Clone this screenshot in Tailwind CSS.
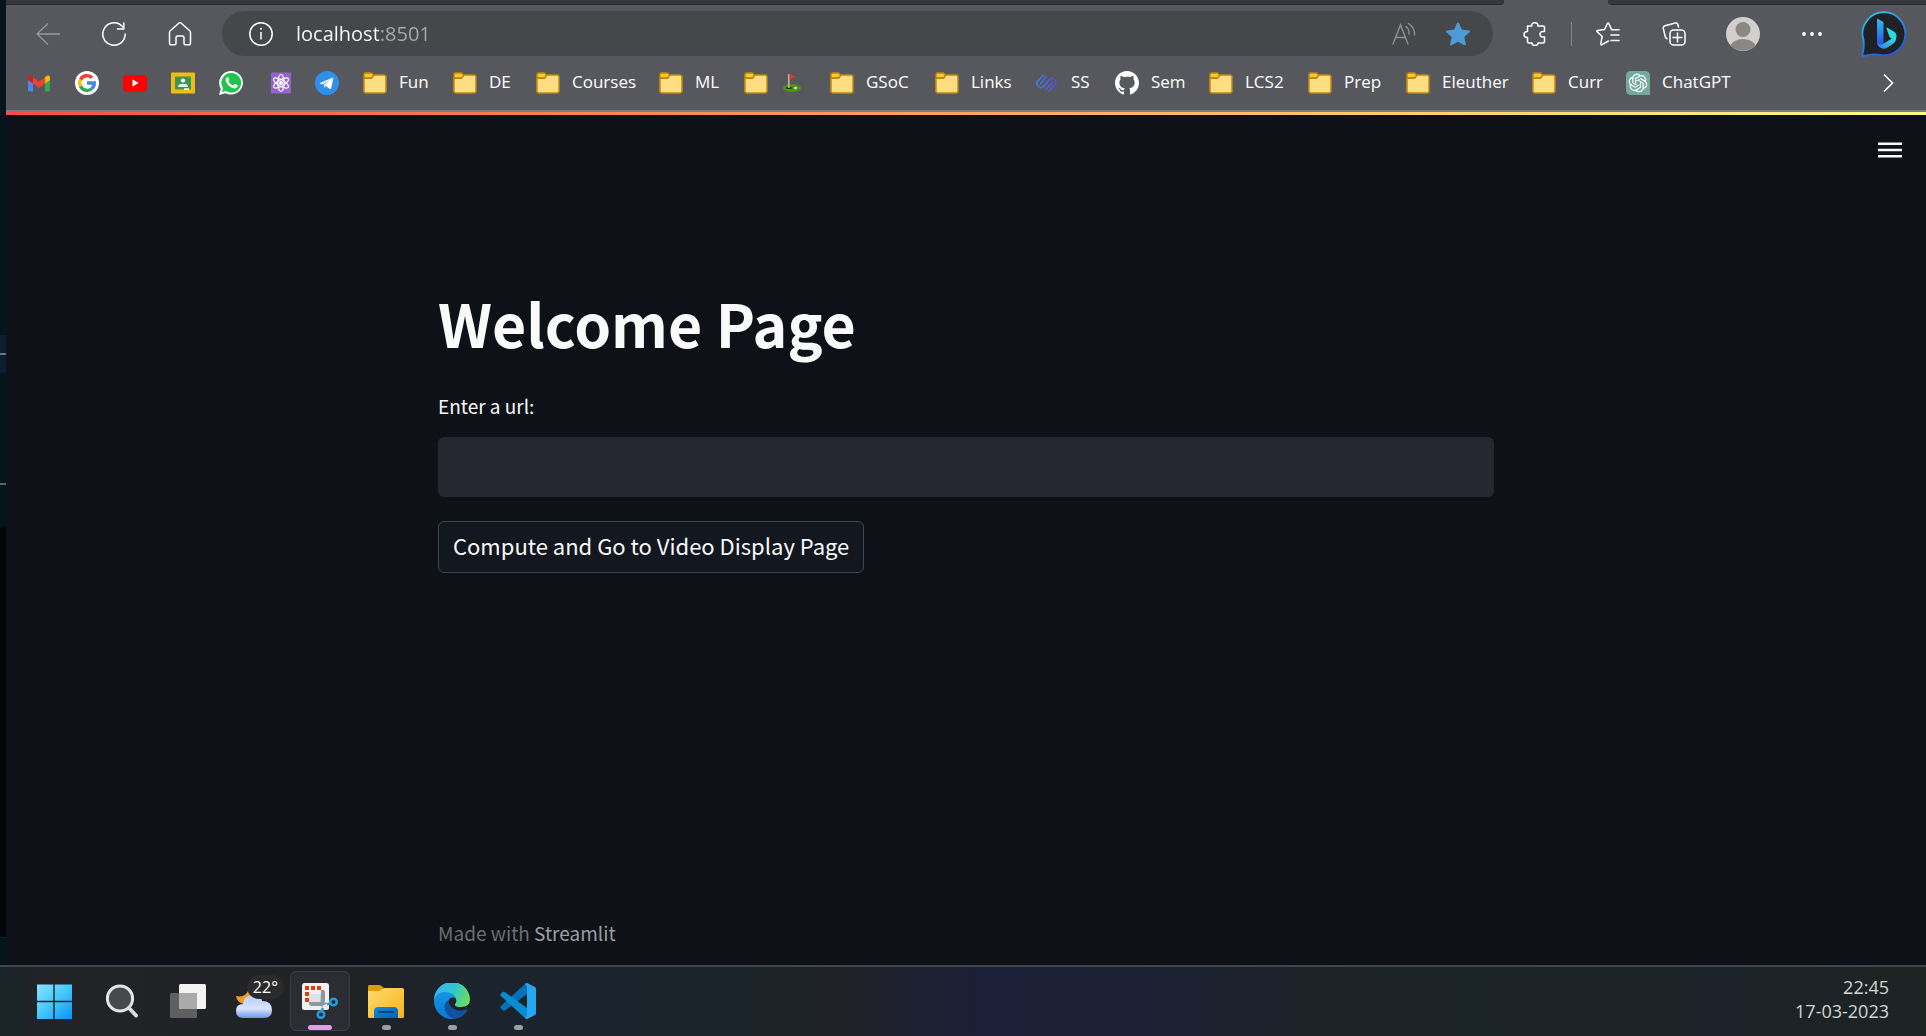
<!DOCTYPE html>
<html lang="en">
<head>
<meta charset="utf-8">
<meta name="viewport" content="width=device-width, initial-scale=1">
<title>Welcome Page</title>
<script src="https://cdn.jsdelivr.net/npm/@tailwindcss/browser@4"></script>
</head>
<body class="flex min-h-screen flex-col bg-[#0e1117] font-['Open_Sans','Noto_Sans',sans-serif] text-white">

<!-- shared symbols -->
<svg class="hidden" aria-hidden="true">
  <symbol id="folder" viewBox="0 0 24 24">
    <path d="M1 21V3.500Q1 2 2.500 2H8.500L10.500 4V7H1Z" fill="#fdc72f" stroke="#b98a10" stroke-width="1.400"/>
    <path d="M1 7.200H8.500L11 4H21Q23 4 23 6V20Q23 22 21 22H3Q1 22 1 20Z" fill="#ffdd80" stroke="#b98a10" stroke-width="1.500" stroke-linejoin="round"/>
  </symbol>
</svg>

<div class="flex flex-1">
  <!-- sliver of the window behind -->
  <div class="flex w-[6px] shrink-0 flex-col bg-[#06151d]" aria-hidden="true">
    <div class="h-[335px]"></div>
    <div class="h-[18px] bg-[#0c1e2d]"></div>
    <div class="h-[2px] bg-[#66767f]"></div>
    <div class="h-[18px] bg-[#0c1e2d]"></div>
    <div class="h-[110px]"></div>
    <div class="h-[2px] bg-[#55656d]"></div>
    <div class="h-[42px]"></div>
    <div class="flex-1 bg-[#020507]"></div>
    <div class="h-7 border-t border-[#12262e]"></div>
  </div>

  <div class="flex min-w-0 flex-1 flex-col">
    <!-- browser chrome -->
    <header class="border-b-2 border-[#7b7c80] bg-[#57585d]">
      <div class="flex h-[5px]">
        <div class="flex-1 rounded-br-sm border-b border-[#2a2b2d] bg-[#37383b]"></div>
        <div class="w-[104px]"></div>
        <div class="w-[318px] rounded-bl-sm border-b border-[#2a2b2d] bg-[#37383b]"></div>
      </div>

      <div class="flex h-[57px] items-center pl-[9px] pr-1">
        <button class="flex w-[66px] justify-center" aria-label="Back">
          <svg class="size-6" viewBox="0 0 24 24" fill="none" stroke="#97989b" stroke-width="1.300"><path d="M24 12H1M12 1.500L1 12L12 22.500"/></svg>
        </button>
        <button class="flex w-[66px] justify-center" aria-label="Refresh">
          <svg class="size-6" viewBox="0 0 24 24" fill="none" stroke="#fff" stroke-width="1.500" stroke-linecap="round" stroke-linejoin="round"><path d="M23.200 12A11.200 11.200 0 1 1 20.700 5M21.800 1V7H15.500"/></svg>
        </button>
        <button class="flex w-[66px] justify-center" aria-label="Home">
          <svg class="size-6" viewBox="0 0 24 24" fill="none" stroke="#fff" stroke-width="1.500" stroke-linejoin="round"><path d="M1.500 10.500Q1.500 9.500 2.300 8.800L11 1Q12 .200 13 1L21.700 8.800Q22.500 9.500 22.500 10.500V21Q22.500 22.800 20.700 22.800H17.500Q16 22.800 16 21.200V15.500Q16 14 14.500 14H9.500Q8 14 8 15.500V21.200Q8 22.800 6.500 22.800H3.300Q1.500 22.800 1.500 21Z"/></svg>
        </button>

        <div class="ml-[9px] flex h-[45px] min-w-0 flex-1 items-center rounded-full bg-[#46474a] pl-[27px] pr-2">
          <button aria-label="Site information">
            <svg class="size-6" viewBox="0 0 24 24" fill="none" stroke="#fff" stroke-width="1.500"><circle cx="12" cy="12" r="11.200"/><path d="M12 10V17.500"/><circle cx="12" cy="6.800" r="1" fill="#fff" stroke="none"/></svg>
          </button>
          <input type="text" aria-label="Address" value="localhost:8501" class="ml-[23px] h-8 min-w-0 flex-1 bg-linear-[to_right,#ffffff_83px,#a9a9ab_83px] bg-clip-text text-[20px] text-transparent outline-none">
          <button class="flex w-[54px] justify-center" aria-label="Read aloud">
            <svg class="size-6" viewBox="0 0 24 24" fill="none" stroke="#8f9093" stroke-width="1.400" stroke-linecap="round"><path d="M1 22L8.500 3L16 22M3.800 15.500H13.200M14 4.500Q17.500 7.500 17 12M16.500 1.500Q23 6 22.500 13"/></svg>
          </button>
          <button class="flex w-[54px] justify-center" aria-label="Edit favorite">
            <svg class="size-6" viewBox="0 0 24 24" fill="#4d9bd6" stroke="#4d9bd6" stroke-width="2" stroke-linejoin="round"><path d="M12 1.500L15.200 8.500L23 9.400L17.200 14.600L18.900 22.300L12 18.500L5.100 22.300L6.800 14.600L1 9.400L8.800 8.500Z"/></svg>
          </button>
        </div>

        <button class="ml-[9px] flex w-[66px] justify-center" aria-label="Extensions">
          <svg class="size-6" viewBox="0 0 24 24" fill="none" stroke="#fff" stroke-width="1.500" stroke-linejoin="round"><path d="M4.500 4H8.800Q8.300 .800 11.800 .800T14.800 4H20Q21.500 4 21.500 5.500V9.500Q17 8.800 17 12.200T21.500 15V19.500Q21.500 21 20 21H15Q15 23.500 12 23.500T9 21H6Q4.500 21 4.500 19.500V15.500Q1 15.500 1 12.500T4.500 9.500Z"/></svg>
        </button>
        <div class="mx-[3px] h-6 w-px bg-[#85868a]"></div>
        <button class="flex w-[66px] justify-center" aria-label="Favorites">
          <svg class="size-6" viewBox="0 0 24 24" fill="none" stroke="#fff" stroke-width="1.500" stroke-linecap="round" stroke-linejoin="round"><path d="M12.500 19L5.500 22.800Q4.500 23 4.700 21.800L6.200 14.500L1 9.500Q.400 8.600 1.500 8.400L8.500 7.500L11.500 1.500Q12.100 .600 12.700 1.500L15.800 7.800H23M15 13H23M15 18.500H23"/></svg>
        </button>
        <button class="flex w-[66px] justify-center" aria-label="Collections">
          <svg class="size-6" viewBox="0 0 24 24" fill="none" stroke="#fff" stroke-width="1.500" stroke-linecap="round" stroke-linejoin="round"><rect x="8" y="8" width="15" height="15" rx="3.500"/><path d="M15.500 11V20M11 15.500H20M16.500 5L15.800 2.300Q15.300 .500 13.300 1L3 3.800Q1 4.300 1.300 6.300L3.200 14.500Q3.500 16 5 16.700"/></svg>
        </button>
        <button class="ml-[3px] flex w-[66px] justify-center" aria-label="Profile">
          <svg class="size-[34px]" viewBox="0 0 34 34"><circle cx="17" cy="17" r="17" fill="#d2d0cd"/><circle cx="17" cy="12.500" r="7.500" fill="#8b8784"/><path d="M4.600 28.500Q8 22 17 22T29.400 28.500A17 17 0 0 1 4.600 28.500Z" fill="#8b8784"/></svg>
        </button>
        <button class="ml-[3px] flex w-[66px] justify-center" aria-label="Settings and more">
          <svg class="size-6" viewBox="0 0 24 24" fill="#fff"><circle cx="4" cy="12" r="1.900"/><circle cx="12" cy="12" r="1.900"/><circle cx="20" cy="12" r="1.900"/></svg>
        </button>
        <button class="flex w-[77px] justify-center" aria-label="Bing chat">
          <svg class="h-[46px] w-[46px]" viewBox="0 0 46 46">
            <defs>
              <linearGradient id="bingRing" x1="0" y1="0" x2=".5" y2="1"><stop offset="0" stop-color="#1cd8f4"/><stop offset="1" stop-color="#2357e8"/></linearGradient>
              <linearGradient id="bingStem" x1="0" y1="0" x2="0" y2="1"><stop offset="0" stop-color="#3cb8fa"/><stop offset="1" stop-color="#1d4fe0"/></linearGradient>
              <linearGradient id="bingBowl" x1="0" y1="1" x2="1" y2="0"><stop offset="0" stop-color="#3b7bf2"/><stop offset="1" stop-color="#2fe0dc"/></linearGradient>
            </defs>
            <path d="M23.500 1.200A21.500 21.500 0 1 1 22 44.300Q16 43 12 43.500L2.500 45Q1.200 45 1.500 43.500Q3.500 36 2.500 29A21.500 21.500 0 0 1 23.500 1.200Z" fill="#202124" stroke="url(#bingRing)" stroke-width="1.800"/>
            <path d="M16 8.500Q16 7.500 17 8L21.500 10.500Q22.500 11 22.500 12.500V33L19 36Q16 34 16 31Z" fill="url(#bingStem)"/>
            <path d="M25.500 17.500Q25.500 16 27 17L33.500 21Q36.500 23.500 35 27.500Q34 29.500 31.500 28.500L28.500 26Z" fill="#2cd9dd"/>
            <path d="M16 31Q17 35 21 33.500L31 27.500Q34.500 26 35 27.500Q35 31 31 33.500L26 36.800Q23 38.500 20 37Q16.500 35 16 31Z" fill="url(#bingBowl)"/>
          </svg>
        </button>
      </div>

      <nav class="flex h-12 items-center gap-6 overflow-hidden pb-[6px] pl-[21px] pr-[31px] text-[17px] leading-[22px]" aria-label="Favorites bar">
        <a href="#" aria-label="Gmail"><svg class="size-6" viewBox="0 0 24 24"><path d="M1 20V6L6 9.500V20Q6 20.500 5.500 20.500H2.500Q1 20.500 1 19Z" fill="#4a86f0"/><path d="M18 9.500L23 6V19Q23 20.500 21.500 20.500H18Z" fill="#35a652"/><path d="M1 9V6.500Q1 4 3.500 4.500L6 6V12.500Z" fill="#c5221f"/><path d="M6 6.200L12 10.800L18 6.200V12.500L12 17L6 12.500Z" fill="#ea4335"/><path d="M18 6L20 4.700Q23 4 23 6.500V9L18 12.500Z" fill="#fbbc04"/></svg></a>
        <a href="#" aria-label="Google"><svg class="size-6" viewBox="0 0 24 24" fill="none" stroke-width="3.400"><circle cx="12" cy="12" r="12" fill="#fff"/><path d="M17.200 6.800A7.300 7.300 0 0 0 5.500 8.700" stroke="#ea4335"/><path d="M5.500 8.700A7.300 7.300 0 0 0 5.500 15.300" stroke="#fbbc05"/><path d="M5.500 15.300A7.300 7.300 0 0 0 16.700 17.700" stroke="#34a853"/><path d="M16.700 17.700A7.300 7.300 0 0 0 19.300 12H12" stroke="#4285f4"/></svg></a>
        <a href="#" aria-label="YouTube"><svg class="size-6" viewBox="0 0 24 24"><rect y="4" width="24" height="16.500" rx="3.500" fill="#f00"/><path d="M9.500 8.300L15.500 12L9.500 15.700Z" fill="#fff"/></svg></a>
        <a href="#" aria-label="Classroom"><svg class="size-6" viewBox="0 0 24 24"><rect y="1.500" width="24" height="21" rx="1" fill="#f3bb16"/><rect x="4" y="5.500" width="16" height="13" fill="#3f9556"/><circle cx="12" cy="9.500" r="2.100" fill="#fff"/><path d="M7 15Q8 12.700 12 12.700T17 15V16H7Z" fill="#e5f2e8"/><path d="M13 17.200H18V19H13Z" fill="#e5f2e8"/></svg></a>
        <a href="#" aria-label="WhatsApp"><svg class="size-6" viewBox="0 0 24 24"><path d="M12.200 0A11.800 11.800 0 1 1 6.500 22.200L0 24L1.800 17.700A11.800 11.800 0 0 1 12.200 0Z" fill="#fff"/><path d="M12.200 2A9.800 9.800 0 1 1 7 20L2.900 21.100L4 17.200A9.800 9.800 0 0 1 12.200 2Z" fill="#1ec44b"/><path d="M8 6.200Q9.200 5.700 9.600 6.600L10.400 8.600Q10.600 9.300 9.500 10.500Q11 13.500 14.200 14.600L15.400 13.200Q15.800 12.800 16.300 13L18.400 14.100Q19 14.500 18.600 15.600Q17.600 17.800 15.300 17.500Q9 16 6.600 9.800Q6.200 7.300 8 6.200Z" fill="#fff"/></svg></a>
        <a href="#" aria-label="Physics"><svg class="size-6" viewBox="0 0 24 24" fill="none" stroke="#fff" stroke-width="1.200"><rect x="4" y="1.500" width="20" height="21" rx="1" fill="#9463cf" stroke="none"/><ellipse cx="14" cy="12" rx="3.200" ry="8.500"/><ellipse cx="14" cy="12" rx="3.200" ry="8.500" transform="rotate(60 14 12)"/><ellipse cx="14" cy="12" rx="3.200" ry="8.500" transform="rotate(120 14 12)"/><circle cx="14" cy="12" r="1.400" fill="#fff"/></svg></a>
        <a href="#" aria-label="Telegram"><svg class="size-6" viewBox="0 0 24 24"><circle cx="12" cy="12" r="12" fill="#2f8fea"/><path d="M5 12L17.300 6.800Q18.500 6.500 18.200 8L16.200 17.300Q15.800 18.600 14.500 17.800L9.200 14L15 9L7.500 13.300Q4 12.700 5 12Z" fill="#fff"/><path d="M8.500 13.500L14.500 9.200L10.800 14.700L9.800 17.300Z" fill="#d5e8fb"/></svg></a>
        <a href="#" class="flex w-[66px] shrink-0 gap-3"><svg class="size-6 shrink-0"><use href="#folder"/></svg>Fun</a>
        <a href="#" class="flex w-[59px] shrink-0 gap-3"><svg class="size-6 shrink-0"><use href="#folder"/></svg>DE</a>
        <a href="#" class="flex w-[99px] shrink-0 gap-3"><svg class="size-6 shrink-0"><use href="#folder"/></svg>Courses</a>
        <a href="#" class="flex w-[61px] shrink-0 gap-3"><svg class="size-6 shrink-0"><use href="#folder"/></svg>ML</a>
        <a href="#" class="flex w-[62px] shrink-0 gap-3" aria-label="Golf"><svg class="size-6 shrink-0"><use href="#folder"/></svg><svg class="size-6 shrink-0" viewBox="0 0 24 24"><ellipse cx="12" cy="17" rx="9" ry="4" fill="#4b931b"/><ellipse cx="9" cy="17" rx="3.200" ry="1" fill="#1d3810"/><path d="M8 3H9.600V17H8Z" fill="#d9a78b"/><path d="M9.600 3L15 5.500L9.600 8.200Z" fill="#f3322c"/><circle cx="15.500" cy="17" r="1.200" fill="#fff"/></svg></a>
        <a href="#" class="flex w-[81px] shrink-0 gap-3"><svg class="size-6 shrink-0"><use href="#folder"/></svg>GSoC</a>
        <a href="#" class="flex w-[76px] shrink-0 gap-3"><svg class="size-6 shrink-0"><use href="#folder"/></svg>Links</a>
        <a href="#" class="flex w-14 shrink-0 gap-3"><svg class="size-6 shrink-0" viewBox="0 0 24 24" fill="none" stroke="url(#ssInk)" stroke-width="1.600" stroke-linecap="round" stroke-linejoin="round"><defs><linearGradient id="ssInk" gradientUnits="userSpaceOnUse" x1="1" y1="12" x2="22" y2="12"><stop offset="0" stop-color="#3f83e6"/><stop offset="1" stop-color="#5e48d2"/></linearGradient></defs><path d="M8.500 4L2.500 10.500Q1 12.500 2.500 14.200L4.300 16Q6 17.500 7.700 16L14.500 8.500M11.500 5.500L5.500 12.500M14 20L20.300 13.500Q22 11.500 20.300 9.800L18.800 8Q17 6.500 15.300 8L8.500 15.800M11 18.500L17.500 11.300"/></svg>SS</a>
        <a href="#" class="flex w-[70px] shrink-0 gap-3"><svg class="size-6 shrink-0" viewBox="0 0 16 16" fill="#fff"><path d="M8 0C3.580 0 0 3.580 0 8c0 3.540 2.290 6.530 5.470 7.590.4.070.55-.17.55-.38 0-.19-.01-.82-.01-1.490-2.010.37-2.530-.49-2.690-.94-.09-.23-.48-.94-.82-1.130-.28-.15-.68-.52-.01-.53.63-.01 1.080.58 1.230.82.72 1.210 1.870.87 2.330.66.07-.52.28-.87.51-1.070-1.780-.2-3.640-.89-3.640-3.950 0-.87.31-1.590.82-2.150-.08-.2-.36-1.020.08-2.120 0 0 .67-.21 2.200.82.64-.18 1.320-.27 2-.27s1.360.09 2 .27c1.530-1.040 2.200-.82 2.200-.82.44 1.100.16 1.920.08 2.120.51.56.82 1.270.82 2.150 0 3.070-1.870 3.750-3.650 3.950.29.25.54.73.54 1.480 0 1.070-.01 1.930-.01 2.200 0 .21.15.46.55.38A8.010 8.010 0 0 0 16 8c0-4.420-3.580-8-8-8Z"/></svg>Sem</a>
        <a href="#" class="flex w-[75px] shrink-0 gap-3"><svg class="size-6 shrink-0"><use href="#folder"/></svg>LCS2</a>
        <a href="#" class="flex w-[74px] shrink-0 gap-3"><svg class="size-6 shrink-0"><use href="#folder"/></svg>Prep</a>
        <a href="#" class="flex w-[102px] shrink-0 gap-3"><svg class="size-6 shrink-0"><use href="#folder"/></svg>Eleuther</a>
        <a href="#" class="flex w-[70px] shrink-0 gap-3"><svg class="size-6 shrink-0"><use href="#folder"/></svg>Curr</a>
        <a href="#" class="flex shrink-0 gap-3"><svg class="size-6 shrink-0" viewBox="0 0 24 24"><path d="M5 0H19Q24 0 24 5V24H5Q0 24 0 19V5Q0 0 5 0Z" fill="#74aa9c"/><g transform="translate(2.600 2.600) scale(.78)" fill="#fff"><path d="M22.282 9.821a5.985 5.985 0 0 0-.516-4.911 6.046 6.046 0 0 0-6.510-2.900A6.065 6.065 0 0 0 4.981 4.182a5.985 5.985 0 0 0-3.998 2.900 6.046 6.046 0 0 0 .743 7.097 5.980 5.980 0 0 0 .511 4.911 6.051 6.051 0 0 0 6.515 2.900A5.985 5.985 0 0 0 13.260 24a6.056 6.056 0 0 0 5.772-4.206 5.989 5.989 0 0 0 3.998-2.900 6.056 6.056 0 0 0-.748-7.073zm-9.022 12.608a4.476 4.476 0 0 1-2.876-1.041l.142-.080 4.778-2.758a.795.795 0 0 0 .393-.681v-6.737l2.020 1.169a.071.071 0 0 1 .038.052v5.583a4.504 4.504 0 0 1-4.495 4.494zm-9.661-4.125a4.471 4.471 0 0 1-.535-3.014l.142.085 4.783 2.758a.771.771 0 0 0 .781 0l5.843-3.369v2.332a.080.080 0 0 1-.033.062L9.740 19.950a4.499 4.499 0 0 1-6.141-1.646zM2.341 7.896a4.485 4.485 0 0 1 2.366-1.973V11.600a.766.766 0 0 0 .388.677l5.814 3.354-2.020 1.169a.076.076 0 0 1-.071 0l-4.830-2.787A4.504 4.504 0 0 1 2.341 7.872zm16.596 3.856L13.104 8.364 15.119 7.200a.076.076 0 0 1 .071 0l4.830 2.791a4.494 4.494 0 0 1-.677 8.104v-5.677a.790.790 0 0 0-.407-.667zm2.011-3.023l-.142-.085-4.774-2.782a.776.776 0 0 0-.785 0L9.409 9.230V6.897a.066.066 0 0 1 .028-.062l4.830-2.787a4.499 4.499 0 0 1 6.680 4.660zM8.307 12.863l-2.020-1.164a.080.080 0 0 1-.038-.057V6.074a4.499 4.499 0 0 1 7.376-3.454l-.142.081L8.704 5.459a.795.795 0 0 0-.393.681zm1.098-2.365l2.602-1.500 2.607 1.500v2.999l-2.597 1.500-2.607-1.500Z"/></g></svg>ChatGPT</a>
        <button class="ml-auto shrink-0" aria-label="More favorites"><svg class="h-5 w-[14px]" viewBox="0 0 14 20" fill="none" stroke="#fff" stroke-width="1.600"><path d="M3 1.500L11.500 10L3 18.500"/></svg></button>
      </nav>
    </header>

    <!-- page -->
    <div class="flex flex-1 flex-col font-['Noto_Sans_CJK_SC',sans-serif] text-[#fafafa]">
      <div class="h-[3px] bg-linear-[to_right,#ff4b4b,#fffd80]"></div>
      <div class="flex h-[70px] items-center justify-end px-6">
        <button aria-label="Menu"><svg class="size-6" viewBox="0 0 24 24" fill="#fafafa"><path d="M0 4.500H24V7H0ZM0 10.800H24V13.200H0ZM0 17H24V19.500H0Z"/></svg></button>
      </div>
      <main class="mx-auto flex w-full max-w-[1056px] flex-1 flex-col items-start">
        <h1 class="mt-[102px] text-[59px] leading-[72px] font-bold">Welcome Page</h1>
        <label for="url" class="mt-[33px] text-[19px] leading-7">Enter a url:</label>
        <input id="url" type="text" class="mt-[17px] h-[60px] w-full rounded-md bg-[#262730] px-4 text-[22px] outline-none">
        <button class="mt-6 h-[52px] rounded-md border border-[#41444b] bg-[#131720] px-[14px] pb-1 text-[22px] leading-8">Compute and Go to Video Display Page</button>
        <footer class="mt-auto pb-[18px] text-[19px] leading-7 text-[#6c6e71]">Made with <a href="#" class="text-[#9c9ea0]">Streamlit</a></footer>
      </main>
    </div>
  </div>
</div>

<!-- taskbar -->
<div class="flex h-[71px] items-start gap-[6px] border-t-2 border-[#434548] bg-linear-[to_right,#18242a_0%,#212327_2%,#202226_19%,#1b242d_25%,#1b242b_38%,#1f2127_44%,#1b1f38_51%,#1b2035_58%,#1d2229_68%,#1b2429_76%,#1b2229_90%,#1e2422_100%] pl-[26px] pr-[37px] pt-1">
  <button class="flex size-[60px] items-center justify-center" aria-label="Start">
    <svg class="size-10" viewBox="0 0 40 40"><defs><linearGradient id="win" gradientUnits="userSpaceOnUse" x1="2" y1="2" x2="35" y2="38"><stop offset="0" stop-color="#8be4ff"/><stop offset=".5" stop-color="#45c8fb"/><stop offset="1" stop-color="#0a95f7"/></linearGradient></defs><path d="M1 3.500H17.300V19.800H1ZM18.700 3.500H36V19.800H18.700ZM1 21.200H17.300V38H1ZM18.700 21.200H36V38H18.700Z" fill="url(#win)"/></svg>
  </button>
  <button class="flex size-[60px] items-center justify-center" aria-label="Search">
    <svg class="size-9" viewBox="0 0 36 36" fill="none"><circle cx="16" cy="15.500" r="12.600" fill="#47494d" stroke="#e4e5e8" stroke-width="3"/><path d="M25 25L32 32.500" stroke="#dadbdf" stroke-width="4" stroke-linecap="round"/></svg>
  </button>
  <button class="flex size-[60px] items-center justify-center" aria-label="Task view">
    <svg class="size-9" viewBox="0 0 36 36"><rect x="9" y="1" width="27" height="25" rx="1.500" fill="#f3f3f3"/><rect y="10" width="27" height="25" rx="1.500" fill="#5f5f60"/><path d="M9 10H25.500Q27 10 27 11.500V26H9Z" fill="#aaa"/></svg>
  </button>
  <button class="relative flex size-[60px] items-center justify-center" aria-label="Weather, 22 degrees">
    <svg class="size-9" viewBox="0 0 36 36"><defs><linearGradient id="cloud" x1="0" y1="0" x2="0" y2="1"><stop offset="0" stop-color="#b4cdfb"/><stop offset=".6" stop-color="#d8e5fc"/><stop offset="1" stop-color="#6f95e8"/></linearGradient></defs><path d="M12 8Q9 15 0 13Q1 20 9 21L18 15Z" fill="#f59a22"/><path d="M7 35Q0 35 0 28T7 21Q8 12 17 12T26 18Q36 18 36 27Q36 35 28 35Z" fill="url(#cloud)"/></svg>
    <span class="absolute right-0 top-1 rounded-full bg-[#2b2b2b] px-[6px] text-base leading-6">22°</span>
  </button>
  <button class="relative flex size-[60px] items-center justify-center rounded-md border border-[#3c3e43] bg-[#2c2d32]" aria-label="Snipping Tool">
    <svg class="size-9" viewBox="0 0 36 36" fill="none"><rect y="0" width="27" height="27" rx="2.500" fill="#eef0f2"/><path d="M7 11H19V23H7Z" fill="#dfe3e7"/><path d="M3 3H7V7H3ZM9 3H13V7H9ZM15 3H19V7H15ZM3 9H7V13H3ZM3 15H7V19H3Z" fill="#dd3f0a"/><path d="M19 7H21Q23 7 23 10V18L20 25L18.500 20ZM7 19H18L27 20L20 23H10Q7 23 7 20Z" fill="#8f969c"/><circle cx="31.500" cy="19" r="3.300" stroke="#1f9fe0" stroke-width="2.400"/><circle cx="19" cy="31.500" r="3.300" stroke="#1f9fe0" stroke-width="2.400"/><path d="M28.500 20L25 21.500M19.500 28L21 25" stroke="#1f9fe0" stroke-width="2.400"/></svg>
    <span class="absolute bottom-0 left-[17px] h-[5px] w-6 rounded-full bg-[#dd9fe6]"></span>
  </button>
  <button class="relative flex size-[60px] items-center justify-center" aria-label="File Explorer">
    <svg class="size-9" viewBox="0 0 36 36"><defs><linearGradient id="exp" x1="0" y1="0" x2="1" y2="1"><stop offset="0" stop-color="#ffdb6e"/><stop offset="1" stop-color="#f8b31a"/></linearGradient><linearGradient id="expb" x1="0" y1="0" x2="1" y2="1"><stop offset="0" stop-color="#178be0"/><stop offset="1" stop-color="#0560ae"/></linearGradient></defs><path d="M0 12V3.500Q0 2 1.500 2H11Q12.500 2 13.500 3L16 5L12 12Z" fill="#dd9c0c"/><path d="M0 8H10Q12 8 13.500 6.500T17 5H34.500Q36 5 36 6.500V33.500Q36 35 34.500 35H1.500Q0 35 0 33.500Z" fill="url(#exp)"/><path d="M6 35V28Q6 24 10 24H26Q30 24 30 28V35Z" fill="url(#expb)"/><path d="M11 29H25" stroke="#07457f" stroke-width="2" stroke-linecap="round"/></svg>
    <span class="absolute bottom-[1px] left-[26px] h-[5px] w-[9px] rounded-full bg-[#9d9ea1]"></span>
  </button>
  <button class="relative flex size-[60px] items-center justify-center" aria-label="Microsoft Edge">
    <svg class="size-9" viewBox="0 0 36 36"><defs><linearGradient id="eTop" x1="0" y1=".3" x2="1" y2=".6"><stop offset="0" stop-color="#36b5f2"/><stop offset=".5" stop-color="#2ec6d0"/><stop offset="1" stop-color="#6be05a"/></linearGradient><linearGradient id="eLeft" x1="0" y1="0" x2="0" y2="1"><stop offset="0" stop-color="#1894e4"/><stop offset="1" stop-color="#0678d4"/></linearGradient></defs><path d="M0 18A18 18 0 0 1 36 16Q36 24 27 24Q20 24 21 21Q23 19 22 16Q19 10 11 10Q3 10 0 18Z" fill="url(#eTop)"/><path d="M0 18Q2 9 11 9Q19 9 22 15Q15 13 14 20Q14 28 26 31Q31 30 33 28Q27 36 18 36A18 18 0 0 1 0 18Z" fill="url(#eLeft)"/><path d="M14.500 17Q9 21 11 27Q13 34 21 35.800Q29 34 33.300 27.500Q33.500 26 32 26.500Q26 29 20 26Q14 22 14.500 17Z" fill="#12519f"/></svg>
    <span class="absolute bottom-[1px] left-[26px] h-[5px] w-[9px] rounded-full bg-[#9d9ea1]"></span>
  </button>
  <button class="relative flex size-[60px] items-center justify-center" aria-label="Visual Studio Code">
    <svg class="size-9" viewBox="0 0 36 36"><path d="M27 0V11L5 27.500Q3.500 28 2.500 27L.500 25Q0 24 .800 23L25 1Z" fill="#0471b8"/><path d="M.500 11L2.500 9Q3.500 8.500 5 9.200L27 25V36L25 35L.800 13Q0 12 .500 11Z" fill="#078bd3"/><path d="M27 0L35 4Q36 4.500 36 6V30Q36 31.500 35 32L27 36Q25.500 36 25 35L27 33V3L25 1Q25.500 0 27 0Z" fill="#27a7f2"/></svg>
    <span class="absolute bottom-[1px] left-[26px] h-[5px] w-[9px] rounded-full bg-[#9d9ea1]"></span>
  </button>
  <div class="ml-auto mt-1 text-right text-[18px] leading-6 text-[#d3d5d6]">
    <div>22:45</div>
    <div>17-03-2023</div>
  </div>
</div>
</body>
</html>
